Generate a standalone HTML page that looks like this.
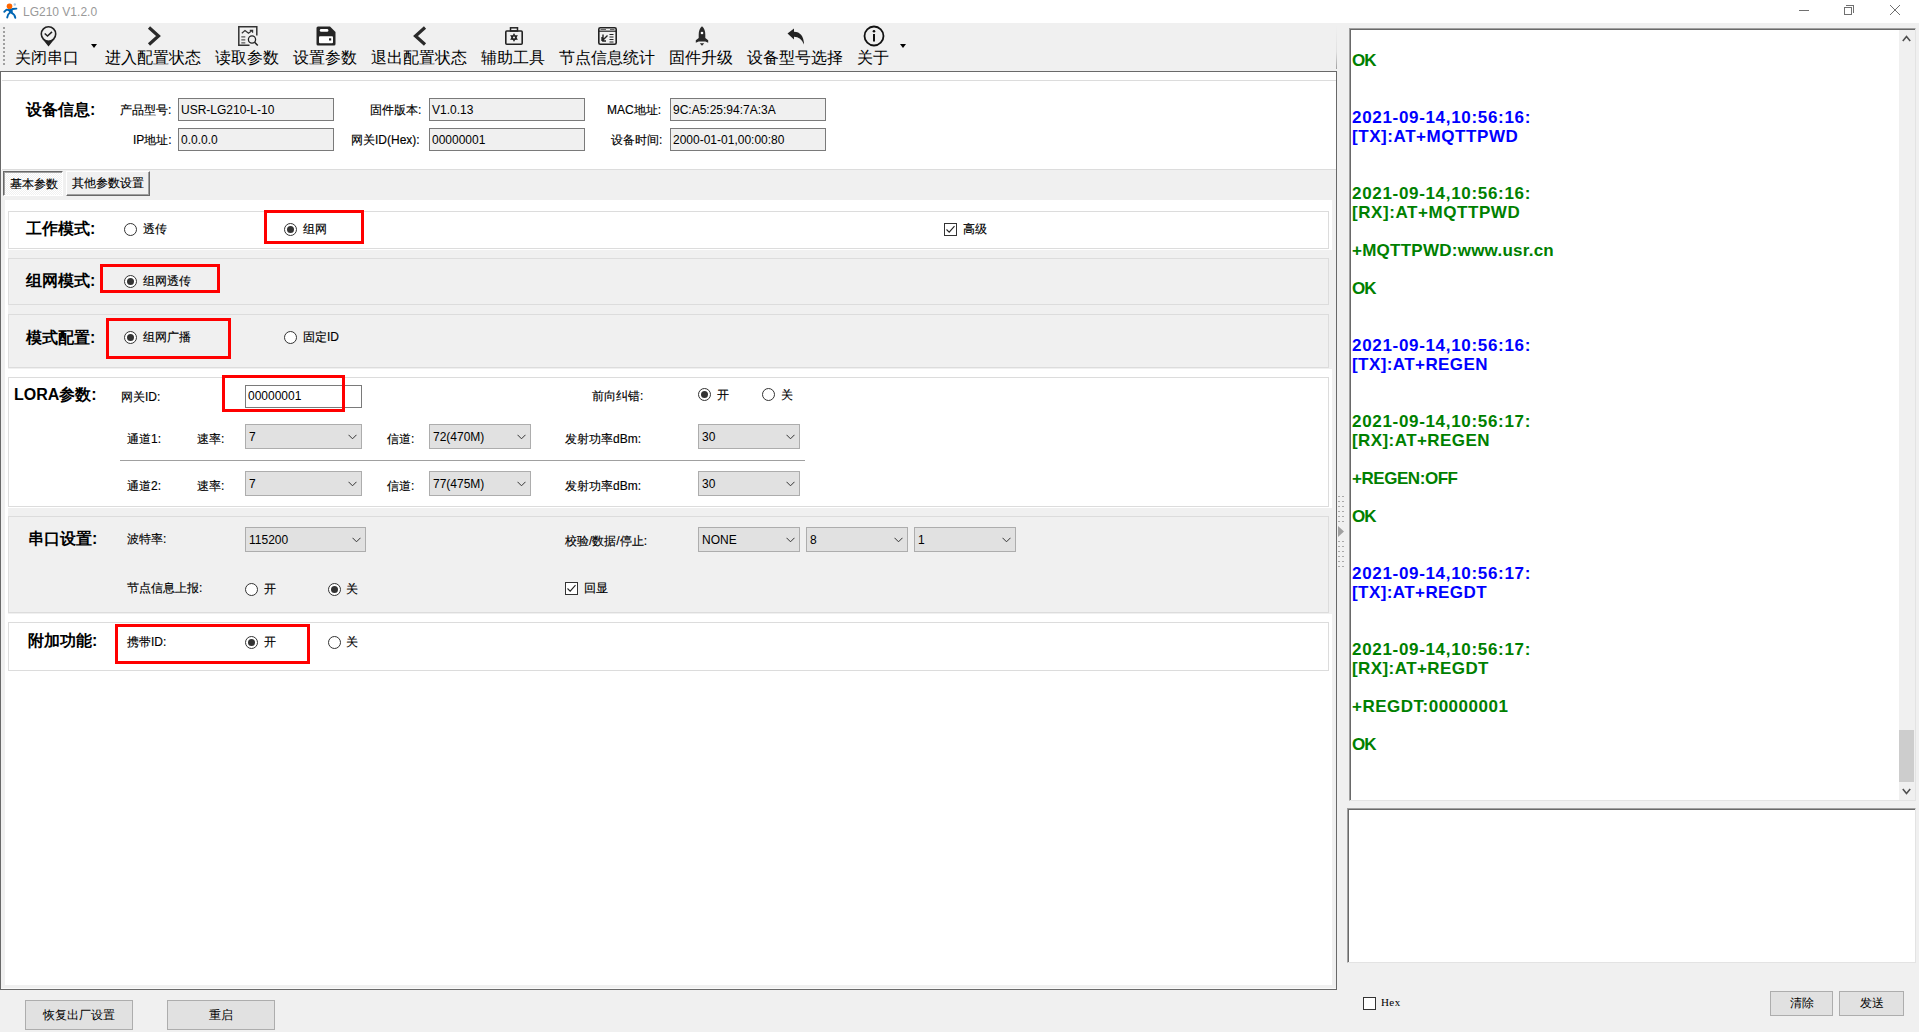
<!DOCTYPE html>
<html><head><meta charset="utf-8">
<style>
*{margin:0;padding:0;box-sizing:border-box}
html,body{width:1919px;height:1032px;overflow:hidden;background:#f0f0f0;font-family:"Liberation Sans",sans-serif;color:#000}
.a{position:absolute}
.l{position:absolute;font-size:12px;line-height:14px;height:14px;white-space:nowrap;-webkit-text-stroke:0.15px #000}
.b16{position:absolute;font-size:16px;font-weight:bold;line-height:18px;height:18px;white-space:nowrap}
.tb{position:absolute;font-size:16px;font-weight:500;line-height:18px;height:18px;white-space:nowrap;color:#000}
.in{position:absolute;background:#f0f0f0;border:1px solid #7a7a7a;font-size:12px;line-height:23px;padding-left:2px;white-space:nowrap}
.cb{position:absolute;background:#e1e1e1;border:1px solid #adadad;font-size:12px;line-height:24px;padding-left:3px;white-space:nowrap}
.cb svg{position:absolute;right:4px;top:9px}
.gb{position:absolute;border:1px solid #dcdcdc}
.rd{position:absolute;width:13px;height:13px;border:1px solid #333;border-radius:50%;background:#fff}
.rd.on::after{content:"";position:absolute;left:2px;top:2px;width:7px;height:7px;border-radius:50%;background:#333}
.red{position:absolute;border:3px solid #ff0000}
.ck{position:absolute;width:13px;height:13px;border:1px solid #333;background:#fff}
.btn{position:absolute;background:#e1e1e1;border:1px solid #adadad;font-size:12px;text-align:center;white-space:nowrap}
.log{position:absolute;font-size:17px;font-weight:bold;line-height:19px;white-space:pre;font-family:"Liberation Sans",sans-serif}
.g{color:#008000}.bl{color:#0000ff}
</style></head><body>
<!-- title bar -->
<div class="a" style="left:0;top:0;width:1919px;height:23px;background:#fff"></div>
<svg class="a" style="left:0;top:0" width="22" height="22" viewBox="0 0 22 22">
 <path d="M4.3 11.8 L6.6 9.6 L9.5 10.2 L12.8 9 L16.4 8.6" stroke="#0066b3" stroke-width="1.9" fill="none" stroke-linecap="round" stroke-linejoin="round"/>
 <path d="M8.2 10.2 L12.6 9.6 L12.8 13 L9.6 13.2Z" fill="#0066b3"/>
 <path d="M9.8 12.8 Q7.8 14 7.2 17.5 M11.5 12.8 Q14.8 14 15.3 17.8" stroke="#0066b3" stroke-width="1.9" fill="none" stroke-linecap="round"/>
 <circle cx="9.5" cy="6.3" r="2.8" fill="#ff6600"/>
 <circle cx="14.8" cy="4.5" r="1.2" fill="#a8c8e6"/>
</svg>
<div class="a" style="left:23px;top:4px;font-size:12px;line-height:16px;color:#999">LG210 V1.2.0</div>
<!-- window controls -->
<div class="a" style="left:1799px;top:10px;width:10px;height:1px;background:#707070"></div>
<div class="a" style="left:1844px;top:7px;width:8px;height:8px;border:1px solid #707070"></div>
<div class="a" style="left:1846px;top:5px;width:8px;height:8px;border-top:1px solid #707070;border-right:1px solid #707070"></div>
<svg class="a" style="left:1890px;top:5px" width="10" height="10" viewBox="0 0 10 10"><path d="M0 0L10 10M10 0L0 10" stroke="#707070" stroke-width="1"/></svg>
<!-- toolbar -->
<div class="a" style="left:3px;top:27px;width:2px;height:38px;background:repeating-linear-gradient(#a0a0a0 0 2px,transparent 2px 4px)"></div>
<div class="tb" style="left:15px;top:49px">关闭串口</div>
<div class="tb" style="left:105px;top:49px">进入配置状态</div>
<div class="tb" style="left:215px;top:49px">读取参数</div>
<div class="tb" style="left:293px;top:49px">设置参数</div>
<div class="tb" style="left:371px;top:49px">退出配置状态</div>
<div class="tb" style="left:481px;top:49px">辅助工具</div>
<div class="tb" style="left:559px;top:49px">节点信息统计</div>
<div class="tb" style="left:669px;top:49px">固件升级</div>
<div class="tb" style="left:747px;top:49px">设备型号选择</div>
<div class="tb" style="left:857px;top:49px">关于</div>
<svg class="a" style="left:91px;top:44px" width="6" height="4"><path d="M0 0H6L3 4Z" fill="#000"/></svg>
<svg class="a" style="left:900px;top:44px" width="6" height="4"><path d="M0 0H6L3 4Z" fill="#000"/></svg>
<!-- icons -->
<svg class="a" style="left:40px;top:26px" width="17" height="21" viewBox="0 0 17 21">
 <circle cx="8.5" cy="8" r="7.2" stroke="#222" stroke-width="1.6" fill="none"/>
 <path d="M4.7 7.5 L7.5 10 L12 5.8" stroke="#222" stroke-width="1.6" fill="none"/>
 <path d="M2.5 13 Q8.5 17 14.5 13 L8.5 20.5 Z" fill="#222"/>
</svg>
<svg class="a" style="left:147px;top:26px" width="14" height="20" viewBox="0 0 14 20">
 <path d="M2 1.5 L11.5 10 L2 18.5" stroke="#2a2a2a" stroke-width="3.2" fill="none"/>
</svg>
<svg class="a" style="left:238px;top:26px" width="21" height="20" viewBox="0 0 21 20">
 <path d="M18.8 9.5 V0.8 H0.8 V19.2 H11.5" stroke="#333" stroke-width="1.5" fill="none"/>
 <path d="M3.8 7.2 L7 4.6 L10.5 7.3 L14.2 4.6 M11.8 4.4 H14.6 V6.8" stroke="#333" stroke-width="1.2" fill="none"/>
 <path d="M3.3 10.8H7.3M3.3 13.8H7.3M3.3 16.8H7.3" stroke="#555" stroke-width="1.2"/>
 <circle cx="14" cy="13.5" r="3.6" stroke="#222" stroke-width="1.3" fill="none"/>
 <path d="M16.6 16.2 L19.8 19.5" stroke="#222" stroke-width="1.5"/>
</svg>
<svg class="a" style="left:316px;top:26px" width="20" height="20" viewBox="0 0 20 20">
 <path d="M2 0.5 H14 L19.5 6 V18 Q19.5 19.5 18 19.5 H2 Q0.5 19.5 0.5 18 V2 Q0.5 0.5 2 0.5Z" fill="#252525"/>
 <rect x="3.8" y="3" width="8.6" height="2.8" rx="1.4" fill="#fff"/>
 <rect x="3" y="10.2" width="14" height="7" rx="1" fill="#fff"/>
 <rect x="13" y="12.3" width="2.2" height="2.2" fill="#252525"/>
</svg>
<svg class="a" style="left:413px;top:26px" width="14" height="20" viewBox="0 0 14 20">
 <path d="M12 1.5 L2.5 10 L12 18.5" stroke="#2a2a2a" stroke-width="3.2" fill="none"/>
</svg>
<svg class="a" style="left:505px;top:27px" width="18" height="18" viewBox="0 0 18 18">
 <rect x="0.8" y="4" width="16.4" height="13.2" rx="1" stroke="#222" stroke-width="1.6" fill="none"/>
 <rect x="5.5" y="0.8" width="7" height="3.2" stroke="#222" stroke-width="1.5" fill="none"/>
 <g transform="translate(9 10.5)" fill="#222"><circle r="2.6"/><path d="M0 -4.5L1.3 -2 L-1.3 -2Z M0 4.5L1.3 2L-1.3 2Z" transform="rotate(0)"/><path d="M0 -4.5L1.3 -2 L-1.3 -2Z M0 4.5L1.3 2L-1.3 2Z" transform="rotate(60)"/><path d="M0 -4.5L1.3 -2 L-1.3 -2Z M0 4.5L1.3 2L-1.3 2Z" transform="rotate(120)"/></g>
 <circle cx="9" cy="10.5" r="1" fill="#f0f0f0"/>
</svg>
<svg class="a" style="left:598px;top:27px" width="19" height="18" viewBox="0 0 19 18">
 <rect x="0.8" y="0.8" width="17.4" height="16.4" rx="1.5" stroke="#222" stroke-width="1.6" fill="none"/>
 <path d="M1 4.2H18" stroke="#222" stroke-width="1.2"/>
 <path d="M2.5 2.5H8M12 2.5H16.5" stroke="#666" stroke-width="1"/>
 <path d="M4 14 L9.5 8.5 M4 14 V10 M4 14 H8 M5 7.5V12" stroke="#222" stroke-width="1.4" fill="none"/>
 <path d="M11.5 7.5H15.5M11.5 10H15.5M11.5 12.5H15.5M11.5 15H15.5" stroke="#222" stroke-width="1.2"/>
</svg>
<svg class="a" style="left:695px;top:26px" width="14" height="20" viewBox="0 0 14 20">
 <path d="M7 0.2 Q10.3 3 10.3 8.5 V12 L13.2 14.3 V16.8 L10.3 15.6 H3.7 L0.8 16.8 V14.3 L3.7 12 V8.5 Q3.7 3 7 0.2Z" fill="#2a2a2a"/>
 <circle cx="7" cy="7" r="1.3" fill="#fff"/>
 <path d="M4.8 17.2 H9.2 L7 19.8Z" fill="#2a2a2a"/>
</svg>
<svg class="a" style="left:787px;top:28px" width="18" height="17" viewBox="0 0 18 17">
 <path d="M0.5 5.5 L7 0.5 V3.8 Q16.5 4 17 16.5 Q14 9 7 8.8 V11.5 Z" fill="#222"/>
</svg>
<svg class="a" style="left:863px;top:25px" width="22" height="22" viewBox="0 0 22 22">
 <circle cx="11" cy="11" r="9.5" stroke="#111" stroke-width="1.8" fill="none"/>
 <circle cx="11" cy="6.2" r="1.3" fill="#111"/>
 <path d="M11 9 V16.5" stroke="#111" stroke-width="2"/>
</svg>
<!-- left panel frame -->
<div class="a" style="left:1336px;top:26px;width:1px;height:43px;background:linear-gradient(#f0f0f0,#e0e0e0 60%,#a0a0a0)"></div>
<div class="a" style="left:0;top:71px;width:1337px;height:919px;background:#f0f0f0;border-left:1px solid #696969;border-top:1px solid #696969;border-right:1px solid #696969;border-bottom:1px solid #696969"></div>
<div class="a" style="left:1px;top:988px;width:1335px;height:1px;background:#fafafa"></div>
<div class="a" style="left:1px;top:72px;width:1335px;height:98px;background:#fff"></div>
<div class="a" style="left:2px;top:80px;width:1334px;height:1px;background:#dcdcdc"></div>
<div class="a" style="left:2px;top:169px;width:1334px;height:1px;background:#dcdcdc"></div>
<!-- device info -->
<div class="b16" style="left:26px;top:101px">设备信息:</div>
<div class="l" style="left:120px;top:103px">产品型号:</div>
<div class="in" style="left:178px;top:98px;width:156px;height:23px">USR-LG210-L-10</div>
<div class="l" style="left:370px;top:103px">固件版本:</div>
<div class="in" style="left:429px;top:98px;width:156px;height:23px">V1.0.13</div>
<div class="l" style="left:607px;top:103px">MAC地址:</div>
<div class="in" style="left:670px;top:98px;width:156px;height:23px">9C:A5:25:94:7A:3A</div>
<div class="l" style="left:133px;top:133px">IP地址:</div>
<div class="in" style="left:178px;top:128px;width:156px;height:23px">0.0.0.0</div>
<div class="l" style="left:351px;top:133px">网关ID(Hex):</div>
<div class="in" style="left:429px;top:128px;width:156px;height:23px">00000001</div>
<div class="l" style="left:611px;top:133px">设备时间:</div>
<div class="in" style="left:670px;top:128px;width:156px;height:23px">2000-01-01,00:00:80</div>
<!-- tabs -->
<div class="a" style="left:3px;top:171px;width:60px;height:25px;border-top:1px solid #696969;border-left:1px solid #696969;border-right:1px solid #fff;border-bottom:1px solid #fff;box-shadow:inset 1px 1px 0 #a0a0a0;background-color:#fafafa;background-image:repeating-conic-gradient(#f0f0f0 0 25%,#fff 0 50%);background-size:2px 2px"></div>
<div class="l" style="left:10px;top:177px">基本参数</div>
<div class="a" style="left:66px;top:171px;width:84px;height:25px;border-top:1px solid #fff;border-left:1px solid #fff;border-right:1px solid #696969;border-bottom:1px solid #696969;box-shadow:inset -1px -1px 0 #a0a0a0"></div>
<div class="l" style="left:72px;top:176px">其他参数设置</div>
<div class="a" style="left:5px;top:200px;width:1327px;height:785px;background:#fff"></div>
<!-- sections -->
<div class="gb" style="left:8px;top:211px;width:1321px;height:38px;background:#fff"></div>
<div class="a" style="left:8px;top:250px;width:1324px;height:119px;background:#f0f0f0"></div>
<div class="gb" style="left:8px;top:258px;width:1321px;height:47px"></div>
<div class="gb" style="left:8px;top:314px;width:1321px;height:54px"></div>
<div class="gb" style="left:8px;top:377px;width:1321px;height:130px"></div>
<div class="a" style="left:8px;top:508px;width:1324px;height:106px;background:#f0f0f0"></div>
<div class="gb" style="left:8px;top:516px;width:1321px;height:97px"></div>
<div class="gb" style="left:8px;top:622px;width:1321px;height:49px"></div>

<!-- section 1 -->
<div class="b16" style="left:26px;top:220px">工作模式:</div>
<div class="rd" style="left:124px;top:223px"></div>
<div class="l" style="left:143px;top:222px">透传</div>
<div class="rd on" style="left:284px;top:223px"></div>
<div class="l" style="left:303px;top:222px">组网</div>
<div class="red" style="left:264px;top:210px;width:100px;height:34px"></div>
<div class="ck" style="left:944px;top:223px"></div>
<svg class="a" style="left:944px;top:223px" width="13" height="13"><path d="M2.5 6.5 L5.2 9.2 L10.5 3.2" stroke="#222" stroke-width="1.1" fill="none"/></svg>
<div class="l" style="left:963px;top:222px">高级</div>

<!-- section 2 -->
<div class="b16" style="left:26px;top:272px">组网模式:</div>
<div class="rd on" style="left:124px;top:275px"></div>
<div class="l" style="left:143px;top:274px">组网透传</div>
<div class="red" style="left:100px;top:264px;width:120px;height:29px"></div>

<!-- section 3 -->
<div class="b16" style="left:26px;top:329px">模式配置:</div>
<div class="rd on" style="left:124px;top:331px"></div>
<div class="l" style="left:143px;top:330px">组网广播</div>
<div class="red" style="left:106px;top:318px;width:125px;height:41px"></div>
<div class="rd" style="left:284px;top:331px"></div>
<div class="l" style="left:303px;top:330px">固定ID</div>

<!-- section 4 LORA -->
<div class="b16" style="left:14px;top:386px">LORA参数:</div>
<div class="l" style="left:121px;top:390px">网关ID:</div>
<div class="a" style="left:245px;top:385px;width:117px;height:23px;border:1px solid #7a7a7a;background:#fff;font-size:12px;line-height:21px;padding-left:2px">00000001</div>
<div class="red" style="left:222px;top:375px;width:123px;height:37px"></div>
<div class="l" style="left:592px;top:389px">前向纠错:</div>
<div class="rd on" style="left:698px;top:388px"></div>
<div class="l" style="left:717px;top:388px">开</div>
<div class="rd" style="left:762px;top:388px"></div>
<div class="l" style="left:781px;top:388px">关</div>

<div class="l" style="left:127px;top:432px">通道1:</div>
<div class="l" style="left:197px;top:432px">速率:</div>
<div class="cb" style="left:245px;top:424px;width:117px;height:25px">7<svg width="9" height="6"><path d="M0.5 0.8 L4.5 4.8 L8.5 0.8" stroke="#333" fill="none"/></svg></div>
<div class="l" style="left:387px;top:432px">信道:</div>
<div class="cb" style="left:429px;top:424px;width:102px;height:25px">72(470M)<svg width="9" height="6"><path d="M0.5 0.8 L4.5 4.8 L8.5 0.8" stroke="#333" fill="none"/></svg></div>
<div class="l" style="left:565px;top:432px">发射功率dBm:</div>
<div class="cb" style="left:698px;top:424px;width:102px;height:25px">30<svg width="9" height="6"><path d="M0.5 0.8 L4.5 4.8 L8.5 0.8" stroke="#333" fill="none"/></svg></div>
<div class="a" style="left:120px;top:460px;width:685px;height:1px;background:#a0a0a0"></div>
<div class="l" style="left:127px;top:479px">通道2:</div>
<div class="l" style="left:197px;top:479px">速率:</div>
<div class="cb" style="left:245px;top:471px;width:117px;height:25px">7<svg width="9" height="6"><path d="M0.5 0.8 L4.5 4.8 L8.5 0.8" stroke="#333" fill="none"/></svg></div>
<div class="l" style="left:387px;top:479px">信道:</div>
<div class="cb" style="left:429px;top:471px;width:102px;height:25px">77(475M)<svg width="9" height="6"><path d="M0.5 0.8 L4.5 4.8 L8.5 0.8" stroke="#333" fill="none"/></svg></div>
<div class="l" style="left:565px;top:479px">发射功率dBm:</div>
<div class="cb" style="left:698px;top:471px;width:102px;height:25px">30<svg width="9" height="6"><path d="M0.5 0.8 L4.5 4.8 L8.5 0.8" stroke="#333" fill="none"/></svg></div>

<!-- section 5 serial -->
<div class="b16" style="left:28px;top:530px">串口设置:</div>
<div class="l" style="left:127px;top:532px">波特率:</div>
<div class="cb" style="left:245px;top:527px;width:121px;height:25px">115200<svg width="9" height="6"><path d="M0.5 0.8 L4.5 4.8 L8.5 0.8" stroke="#333" fill="none"/></svg></div>
<div class="l" style="left:565px;top:534px">校验/数据/停止:</div>
<div class="cb" style="left:698px;top:527px;width:102px;height:25px">NONE<svg width="9" height="6"><path d="M0.5 0.8 L4.5 4.8 L8.5 0.8" stroke="#333" fill="none"/></svg></div>
<div class="cb" style="left:806px;top:527px;width:102px;height:25px">8<svg width="9" height="6"><path d="M0.5 0.8 L4.5 4.8 L8.5 0.8" stroke="#333" fill="none"/></svg></div>
<div class="cb" style="left:914px;top:527px;width:102px;height:25px">1<svg width="9" height="6"><path d="M0.5 0.8 L4.5 4.8 L8.5 0.8" stroke="#333" fill="none"/></svg></div>
<div class="l" style="left:127px;top:581px">节点信息上报:</div>
<div class="rd" style="left:245px;top:583px"></div>
<div class="l" style="left:264px;top:582px">开</div>
<div class="rd on" style="left:328px;top:583px"></div>
<div class="l" style="left:346px;top:582px">关</div>
<div class="ck" style="left:565px;top:582px"></div>
<svg class="a" style="left:565px;top:582px" width="13" height="13"><path d="M2.5 6.5 L5.2 9.2 L10.5 3.2" stroke="#222" stroke-width="1.1" fill="none"/></svg>
<div class="l" style="left:584px;top:581px">回显</div>

<!-- section 6 -->
<div class="b16" style="left:28px;top:632px">附加功能:</div>
<div class="l" style="left:127px;top:635px">携带ID:</div>
<div class="rd on" style="left:245px;top:636px"></div>
<div class="l" style="left:264px;top:635px">开</div>
<div class="red" style="left:115px;top:624px;width:195px;height:40px"></div>
<div class="rd" style="left:328px;top:636px"></div>
<div class="l" style="left:346px;top:635px">关</div>

<!-- bottom buttons -->
<div class="btn" style="left:25px;top:1000px;width:108px;height:30px;line-height:28px">恢复出厂设置</div>
<div class="btn" style="left:167px;top:1000px;width:108px;height:30px;line-height:28px">重启</div>
<!-- splitter grip -->
<div class="a" style="left:1338px;top:496px;width:2px;height:30px;background:repeating-linear-gradient(#a8a8a8 0 1px,transparent 1px 5px)"></div>
<div class="a" style="left:1342px;top:496px;width:2px;height:30px;background:repeating-linear-gradient(#a8a8a8 0 1px,transparent 1px 5px)"></div>
<div class="a" style="left:1338px;top:541px;width:2px;height:27px;background:repeating-linear-gradient(#a8a8a8 0 1px,transparent 1px 5px)"></div>
<div class="a" style="left:1342px;top:541px;width:2px;height:27px;background:repeating-linear-gradient(#a8a8a8 0 1px,transparent 1px 5px)"></div>
<svg class="a" style="left:1338px;top:526px" width="6" height="11"><path d="M0 0 L6 5.5 L0 11Z" fill="#a0a0a0"/></svg>
<!-- log box -->
<div class="a" style="left:1349px;top:28px;width:567px;height:773px;background:#fff;border-top:1px solid #a0a0a0;border-left:1px solid #a0a0a0;border-right:1px solid #e3e3e3;border-bottom:1px solid #e3e3e3;box-shadow:inset 1px 1px 0 #696969"></div>
<div class="a" style="left:1899px;top:30px;width:16px;height:770px;background:#f0f0f0"></div>
<svg class="a" style="left:1902px;top:35px" width="9" height="7"><path d="M0.8 6 L4.5 1.5 L8.2 6" stroke="#505050" stroke-width="1.6" fill="none"/></svg>
<div class="a" style="left:1899px;top:730px;width:15px;height:52px;background:#cdcdcd"></div>
<svg class="a" style="left:1902px;top:788px" width="9" height="7"><path d="M0.8 1 L4.5 5.5 L8.2 1" stroke="#505050" stroke-width="1.6" fill="none"/></svg>
<div class="log g" style="left:1352px;top:51px;letter-spacing:-1px">OK</div>
<div class="log bl" style="left:1352px;top:108px;letter-spacing:0.68px">2021-09-14,10:56:16:</div>
<div class="log bl" style="left:1352px;top:127px;letter-spacing:0.57px">[TX]:AT+MQTTPWD</div>
<div class="log g" style="left:1352px;top:184px;letter-spacing:0.68px">2021-09-14,10:56:16:</div>
<div class="log g" style="left:1352px;top:203px;letter-spacing:0.57px">[RX]:AT+MQTTPWD</div>
<div class="log g" style="left:1352px;top:241px;letter-spacing:0.25px">+MQTTPWD:www.usr.cn</div>
<div class="log g" style="left:1352px;top:279px;letter-spacing:-1px">OK</div>
<div class="log bl" style="left:1352px;top:336px;letter-spacing:0.68px">2021-09-14,10:56:16:</div>
<div class="log bl" style="left:1352px;top:355px;letter-spacing:0.42px">[TX]:AT+REGEN</div>
<div class="log g" style="left:1352px;top:412px;letter-spacing:0.68px">2021-09-14,10:56:17:</div>
<div class="log g" style="left:1352px;top:431px;letter-spacing:0.42px">[RX]:AT+REGEN</div>
<div class="log g" style="left:1352px;top:469px;letter-spacing:-0.45px">+REGEN:OFF</div>
<div class="log g" style="left:1352px;top:507px;letter-spacing:-1px">OK</div>
<div class="log bl" style="left:1352px;top:564px;letter-spacing:0.68px">2021-09-14,10:56:17:</div>
<div class="log bl" style="left:1352px;top:583px;letter-spacing:0.42px">[TX]:AT+REGDT</div>
<div class="log g" style="left:1352px;top:640px;letter-spacing:0.68px">2021-09-14,10:56:17:</div>
<div class="log g" style="left:1352px;top:659px;letter-spacing:0.42px">[RX]:AT+REGDT</div>
<div class="log g" style="left:1352px;top:697px;letter-spacing:0.5px">+REGDT:00000001</div>
<div class="log g" style="left:1352px;top:735px;letter-spacing:-1px">OK</div>
<!-- input box -->
<div class="a" style="left:1347px;top:808px;width:569px;height:155px;background:#fff;border-top:1px solid #a0a0a0;border-left:1px solid #a0a0a0;border-right:1px solid #e3e3e3;border-bottom:1px solid #e3e3e3;box-shadow:inset 1px 1px 0 #696969"></div>
<div class="ck" style="left:1363px;top:997px"></div>
<div class="a" style="left:1381px;top:995px;font-size:11px;line-height:14px;font-family:'Liberation Serif',serif;letter-spacing:0.4px">Hex</div>
<div class="btn" style="left:1770px;top:991px;width:63px;height:25px;line-height:23px">清除</div>
<div class="btn" style="left:1839px;top:991px;width:65px;height:25px;line-height:23px">发送</div>
</body></html>
